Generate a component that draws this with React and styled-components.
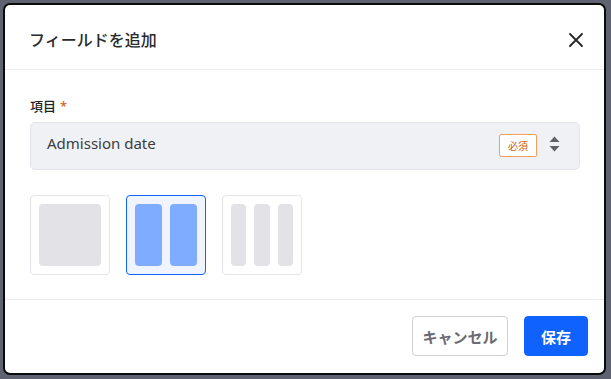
import React, { useState } from "react";
import styled, { createGlobalStyle } from "styled-components";

const Global = createGlobalStyle`
  html, body { margin: 0; padding: 0; background: #5f6270; }
  body { font-family: "Noto Sans", "Noto Sans CJK JP", sans-serif; }
  * { box-sizing: border-box; }
`;

const Page = styled.div`
  width: 611px;
  height: 379px;
  padding: 3px;
  background: #5f6270;
`;

const Dialog = styled.div`
  width: 603px;
  height: 372px;
  background: #fff;
  border: 2px solid #0b0b0b;
  border-radius: 7px;
  display: flex;
  flex-direction: column;
  overflow: hidden;
`;

const Header = styled.div`
  display: flex;
  align-items: center;
  justify-content: space-between;
  padding: 22px 24px 16px 24px;
  border-bottom: 1px solid #ececef;
`;

const Title = styled.h2`
  margin: 0;
  font-size: 16px;
  line-height: 26px;
  font-weight: 500;
  color: #2a2a2e;
`;

const CloseButton = styled.button`
  width: 24px;
  height: 24px;
  border: none;
  background: none;
  padding: 0;
  margin-right: -8px;
  display: flex;
  align-items: center;
  justify-content: center;
  cursor: pointer;
`;

const Body = styled.div`
  padding: 26px 24px 24px 25px;
  border-bottom: 1px solid #ececef;
`;

const Label = styled.div`
  font-size: 13px;
  line-height: 20px;
  font-weight: 500;
  color: #222;
  margin-bottom: 6px;
  display: flex;
  gap: 4px;
`;

const Required = styled.span`
  color: #d2641c;
  font-size: 13px;
`;

const SelectBox = styled.div`
  height: 48px;
  background: #f0f1f5;
  border: 1px solid #e3e4e9;
  border-radius: 5px;
  display: flex;
  align-items: flex-start;
  padding: 9px 19px 0 16px;
`;

const SelectText = styled.span`
  flex: 1;
  font-size: 15px;
  line-height: 22px;
  color: #3c3c40;
`;

const Badge = styled.span`
  margin-top: 2px;
  width: 38px;
  height: 23px;
  border: 1px solid #f3a05c;
  border-radius: 2px;
  background: #fff;
  color: #c8641e;
  font-size: 10px;
  display: flex;
  align-items: center;
  justify-content: center;
`;

const Arrows = styled.span`
  margin-left: 12px;
  margin-top: 4px;
  display: flex;
`;

const Options = styled.div`
  display: flex;
  gap: 16px;
  margin-top: 25px;
`;

const Option = styled.div`
  width: 80px;
  height: 80px;
  border: 1px solid ${(p) => (p.$active ? "#0f62fe" : "#e4e4ea")};
  background: ${(p) => (p.$active ? "#eff4ff" : "#fff")};
  border-radius: 4px;
  padding: 8px;
  display: flex;
  gap: 8px;
  cursor: pointer;
`;

const Bar = styled.div`
  flex: 1;
  border-radius: 4px;
  background: ${(p) => (p.$active ? "#80acff" : "#e2e2e7")};
`;

const Footer = styled.div`
  flex: 1;
  display: flex;
  justify-content: flex-end;
  gap: 16px;
  padding: 16px 16px 0 0;
`;

const Button = styled.button`
  height: 40px;
  padding: 0;
  width: ${(p) => p.$w}px;
  border-radius: 4px;
  font-family: "Noto Sans CJK JP", sans-serif;
  font-size: 15px;
  font-weight: 700;
  cursor: pointer;
  border: 1px solid ${(p) => (p.$primary ? "#0f62fe" : "#cfd0d8")};
  background: ${(p) => (p.$primary ? "#0f62fe" : "#fff")};
  color: ${(p) => (p.$primary ? "#fff" : "#6a6b72")};
`;

const layouts = [1, 2, 3];

export default function App() {
  const [selected, setSelected] = useState(2);
  return (
    <>
      <Global />
      <Page>
        <Dialog>
          <Header>
            <Title>フィールドを追加</Title>
            <CloseButton aria-label="close">
              <svg width="16" height="16" viewBox="0 0 16 16">
                <path d="M2 2 L14 14 M14 2 L2 14" stroke="#2a2a2e" strokeWidth="1.9" strokeLinecap="round" />
              </svg>
            </CloseButton>
          </Header>
          <Body>
            <Label>
              項目<Required>*</Required>
            </Label>
            <SelectBox>
              <SelectText>Admission date</SelectText>
              <Badge>必須</Badge>
              <Arrows>
                <svg width="11" height="16" viewBox="0 0 11 16">
                  <path d="M5.5 0.5 L10.5 6 L0.5 6 Z" fill="#626268" />
                  <path d="M5.5 15.5 L10.5 10 L0.5 10 Z" fill="#626268" />
                </svg>
              </Arrows>
            </SelectBox>
            <Options>
              {layouts.map((n) => (
                <Option key={n} $active={selected === n} onClick={() => setSelected(n)}>
                  {Array.from({ length: n }).map((_, i) => (
                    <Bar key={i} $active={selected === n} />
                  ))}
                </Option>
              ))}
            </Options>
          </Body>
          <Footer>
            <Button $w={96}>キャンセル</Button>
            <Button $w={64} $primary>保存</Button>
          </Footer>
        </Dialog>
      </Page>
    </>
  );
}
